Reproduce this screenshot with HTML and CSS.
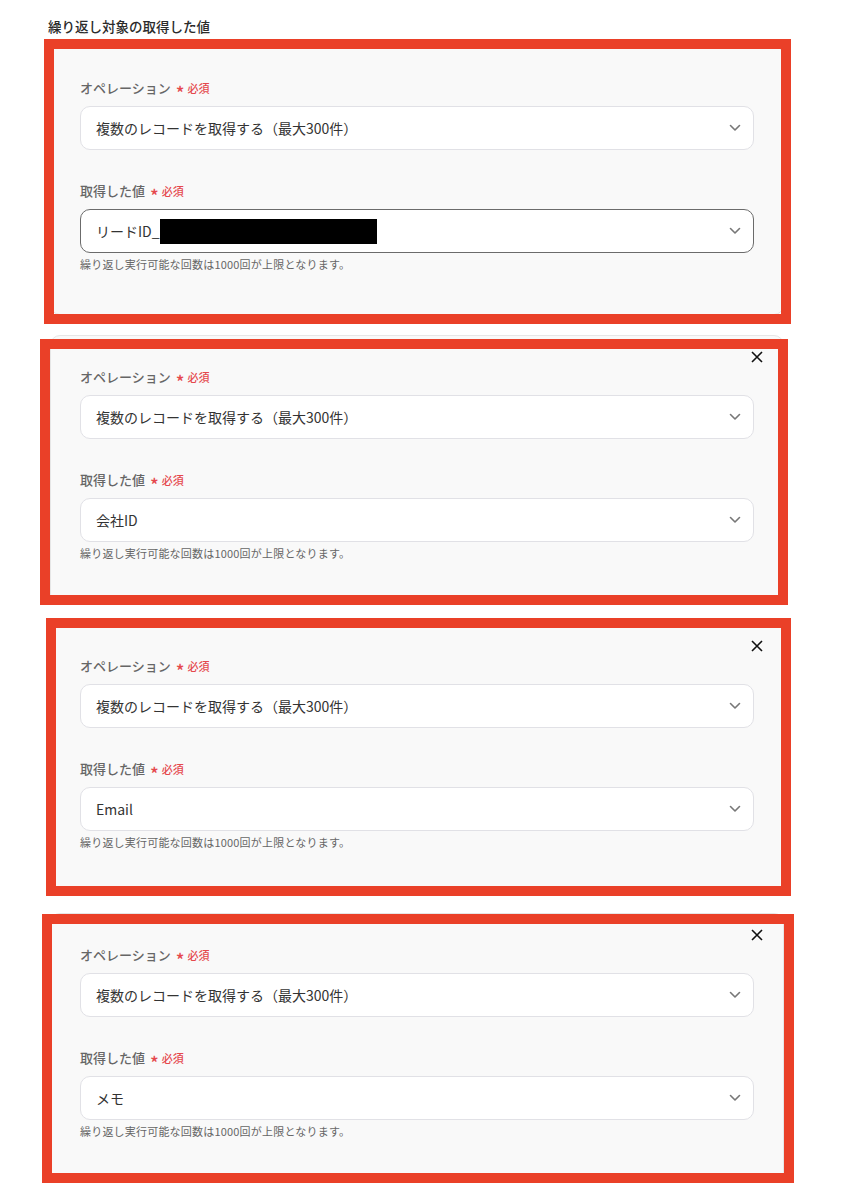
FILE: index.html
```html
<!DOCTYPE html>
<html lang="ja">
<head>
    <meta charset="UTF-8">
    <title>繰り返し対象の取得した値</title>
    <link rel="stylesheet" href="styles.css">
</head>
<body>

    <div class="page">
        <h3 class="title">繰り返し対象の取得した値</h3>

        <!-- loop items -->
        <div class="card">
            <div class="field">
                <label class="label">オペレーション<span class="req"><span class="star">*</span>必須</span></label>
                <div class="select">
                    <span class="value">複数のレコードを取得する（最大300件）</span>
                    <svg class="chevron" width="12" height="8" viewBox="0 0 12 8"><polyline points="1.5,1.5 6,6 10.5,1.5" fill="none" stroke="#777" stroke-width="1.6" stroke-linecap="round" stroke-linejoin="round"/></svg>
                </div>
            </div>
            <div class="field">
                <label class="label">取得した値<span class="req"><span class="star">*</span>必須</span></label>
                <div class="select focused">
                    <span class="value">リードID_<span class="redacted"></span></span>
                    <svg class="chevron" width="12" height="8" viewBox="0 0 12 8"><polyline points="1.5,1.5 6,6 10.5,1.5" fill="none" stroke="#777" stroke-width="1.6" stroke-linecap="round" stroke-linejoin="round"/></svg>
                </div>
                <p class="help">繰り返し実行可能な回数は1000回が上限となります。</p>
            </div>
        </div>

        <div class="card">
            <button class="close" aria-label="削除"><svg width="12" height="12" viewBox="0 0 12 12"><path d="M1 1L11 11M11 1L1 11" stroke="#111" stroke-width="1.6"/></svg></button>
            <div class="field">
                <label class="label">オペレーション<span class="req"><span class="star">*</span>必須</span></label>
                <div class="select">
                    <span class="value">複数のレコードを取得する（最大300件）</span>
                    <svg class="chevron" width="12" height="8" viewBox="0 0 12 8"><polyline points="1.5,1.5 6,6 10.5,1.5" fill="none" stroke="#777" stroke-width="1.6" stroke-linecap="round" stroke-linejoin="round"/></svg>
                </div>
            </div>
            <div class="field">
                <label class="label">取得した値<span class="req"><span class="star">*</span>必須</span></label>
                <div class="select">
                    <span class="value">会社ID</span>
                    <svg class="chevron" width="12" height="8" viewBox="0 0 12 8"><polyline points="1.5,1.5 6,6 10.5,1.5" fill="none" stroke="#777" stroke-width="1.6" stroke-linecap="round" stroke-linejoin="round"/></svg>
                </div>
                <p class="help">繰り返し実行可能な回数は1000回が上限となります。</p>
            </div>
        </div>

        <div class="card">
            <button class="close" aria-label="削除"><svg width="12" height="12" viewBox="0 0 12 12"><path d="M1 1L11 11M11 1L1 11" stroke="#111" stroke-width="1.6"/></svg></button>
            <div class="field">
                <label class="label">オペレーション<span class="req"><span class="star">*</span>必須</span></label>
                <div class="select">
                    <span class="value">複数のレコードを取得する（最大300件）</span>
                    <svg class="chevron" width="12" height="8" viewBox="0 0 12 8"><polyline points="1.5,1.5 6,6 10.5,1.5" fill="none" stroke="#777" stroke-width="1.6" stroke-linecap="round" stroke-linejoin="round"/></svg>
                </div>
            </div>
            <div class="field">
                <label class="label">取得した値<span class="req"><span class="star">*</span>必須</span></label>
                <div class="select">
                    <span class="value">Email</span>
                    <svg class="chevron" width="12" height="8" viewBox="0 0 12 8"><polyline points="1.5,1.5 6,6 10.5,1.5" fill="none" stroke="#777" stroke-width="1.6" stroke-linecap="round" stroke-linejoin="round"/></svg>
                </div>
                <p class="help">繰り返し実行可能な回数は1000回が上限となります。</p>
            </div>
        </div>

        <div class="card">
            <button class="close" aria-label="削除"><svg width="12" height="12" viewBox="0 0 12 12"><path d="M1 1L11 11M11 1L1 11" stroke="#111" stroke-width="1.6"/></svg></button>
            <div class="field">
                <label class="label">オペレーション<span class="req"><span class="star">*</span>必須</span></label>
                <div class="select">
                    <span class="value">複数のレコードを取得する（最大300件）</span>
                    <svg class="chevron" width="12" height="8" viewBox="0 0 12 8"><polyline points="1.5,1.5 6,6 10.5,1.5" fill="none" stroke="#777" stroke-width="1.6" stroke-linecap="round" stroke-linejoin="round"/></svg>
                </div>
            </div>
            <div class="field">
                <label class="label">取得した値<span class="req"><span class="star">*</span>必須</span></label>
                <div class="select">
                    <span class="value">メモ</span>
                    <svg class="chevron" width="12" height="8" viewBox="0 0 12 8"><polyline points="1.5,1.5 6,6 10.5,1.5" fill="none" stroke="#777" stroke-width="1.6" stroke-linecap="round" stroke-linejoin="round"/></svg>
                </div>
                <p class="help">繰り返し実行可能な回数は1000回が上限となります。</p>
            </div>
        </div>
    </div>

    <!-- red highlight frames drawn over the cards -->
    <div class="mark mark-1"></div>
    <div class="mark mark-2"></div>
    <div class="mark mark-3"></div>
    <div class="mark mark-4"></div>

</body>
</html>
```

FILE: styles.css
```css
body {
    margin: 0;
    padding: 0;
    background: #fff;
    font-family: "Noto Sans CJK JP", "Noto Sans", sans-serif;
    color: #333;
    position: relative;
    min-height: 1203px;
}

.page {
    padding: 16px 0 0 50px;
    width: 734px;
}

.title {
    margin: 0 0 10px -2px;
    font-size: 13.5px;
    line-height: 20px;
    font-weight: 500;
    color: #2b2b2b;
}

.card {
    position: relative;
    box-sizing: border-box;
    height: 269px;
    margin-bottom: 20px;
    padding: 31px 29px 0;
    background: #f9f9f9;
    border: 1px solid #e6e6e6;
    border-radius: 10px;
}

.close {
    position: absolute;
    top: 14px;
    right: 19px;
    width: 14px;
    height: 14px;
    padding: 1px;
    border: none;
    background: none;
    cursor: pointer;
}

.field + .field {
    margin-top: 31px;
}

.label {
    display: flex;
    align-items: center;
    font-size: 13px;
    line-height: 20px;
    font-weight: 500;
    color: #666;
}

.req {
    display: flex;
    align-items: center;
    margin-left: 5px;
    font-size: 11px;
    color: #e5484d;
}

.star {
    font-size: 18px;
    line-height: 10px;
    margin-right: 3px;
    padding-top: 7px;
}

.select {
    box-sizing: border-box;
    display: flex;
    align-items: center;
    justify-content: space-between;
    height: 44px;
    margin-top: 8px;
    padding: 0 12px 0 15px;
    background: #fff;
    border: 1px solid #e1e1e6;
    border-radius: 10px;
    font-size: 14px;
    color: #333;
}

.select.focused {
    border-color: #6b6b6b;
}

.value {
    display: flex;
    align-items: center;
}

.redacted {
    display: inline-block;
    width: 217px;
    height: 25px;
    background: #000;
}

.help {
    margin: 4px 0 0;
    font-size: 11px;
    line-height: 15px;
    letter-spacing: 0.2px;
    color: #666;
}

.mark {
    position: absolute;
    box-sizing: border-box;
    border: 10px solid #ea4028;
    pointer-events: none;
}

.mark-1 { left: 44px; top: 39px; width: 747px; height: 285px; }
.mark-2 { left: 40px; top: 339px; width: 748px; height: 266px; }
.mark-3 { left: 46px; top: 618px; width: 745px; height: 278px; }
.mark-4 { left: 42px; top: 914px; width: 752px; height: 269px; }
```
